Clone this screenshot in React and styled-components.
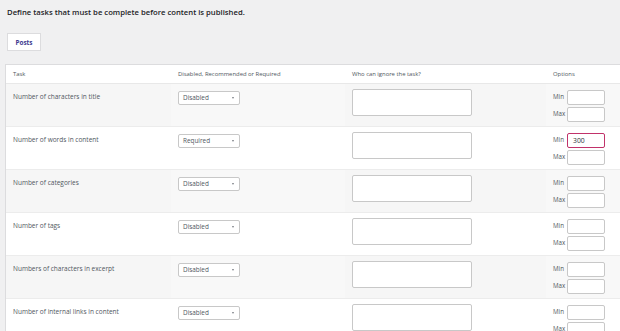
import React from "react";
import styled, { createGlobalStyle } from "styled-components";

const GlobalStyle = createGlobalStyle`
  html, body {
    margin: 0;
    padding: 0;
    background: #f0f0f1;
    font-family: "Open Sans", "Noto Sans", sans-serif;
    overflow: hidden;
  }
`;

const Page = styled.div`
  width: 620px;
  height: 331px;
  overflow: hidden;
  padding-left: 5px;
  box-sizing: border-box;
`;

const Title = styled.h2`
  margin: 0;
  padding: 6px 0 0 2px;
  height: 27px;
  box-sizing: border-box;
  font-size: 7.7px;
  font-weight: 600;
  color: #1d2327;
  line-height: 12px;
`;

const Tabs = styled.div`
  display: flex;
  padding-left: 2px;
  height: 37px;
  padding-top: 6px;
  box-sizing: border-box;
`;

const Tab = styled.button`
  width: 34px;
  height: 18px;
  padding: 0;
  background: #fff;
  border: 1px solid #dcdcde;
  color: #3c3a8f;
  font-family: inherit;
  font-size: 6.4px;
  font-weight: 700;
`;

const Table = styled.div`
  width: 640px;
  background: #fff;
  border-left: 1px solid #dcdcde;
  border-top: 1px solid #dcdcde;
`;

const cols = "165px 174px 201px 1fr";

const HeadRow = styled.div`
  display: grid;
  grid-template-columns: ${cols};
  height: 18px;
  align-items: center;
  border-bottom: 1px solid #e8e8e8;
  font-size: 5.9px;
  color: #50575e;
`;

const HeadCell = styled.div`
  padding-left: 7px;
`;

const Row = styled.div`
  display: grid;
  grid-template-columns: ${cols};
  height: 43px;
  box-sizing: border-box;
  border-bottom: 1px solid #ececec;
  background: ${(p) => (p.$alt ? "#f6f6f6" : "#fff")};
`;

const Cell = styled.div`
  padding: 5px 0 0 7px;
  font-size: 6.5px;
  color: #50575e;
  line-height: 16px;
  background: ${(p) => (p.$alt && p.$light ? "#f8f8f8" : "transparent")};
`;

const Select = styled.div`
  display: flex;
  align-items: center;
  justify-content: space-between;
  width: 62px;
  height: 14px;
  box-sizing: border-box;
  margin-top: 2px;
  padding: 0 5px 0 4px;
  background: #fff;
  border: 1px solid #c8c8c8;
  border-radius: 2px;
  font-size: 6.4px;
  color: #50575e;
  line-height: 12px;
`;

const Caret = styled.span`
  width: 0;
  height: 0;
  border-left: 1.6px solid transparent;
  border-right: 1.6px solid transparent;
  border-top: 2px solid #787c82;
`;

const TextBox = styled.div`
  width: 120px;
  height: 27px;
  box-sizing: border-box;
  background: #fff;
  border: 1px solid #c8c8c8;
  border-radius: 2px;
`;

const Options = styled.div`
  display: flex;
  flex-direction: column;
  gap: 3px;
  margin-top: 1px;
`;

const OptLine = styled.div`
  display: flex;
  align-items: center;
  height: 14px;
`;

const OptLabel = styled.span`
  width: 14px;
  font-size: 6.2px;
  color: #50575e;
`;

const NumInput = styled.div`
  width: 38px;
  height: 15px;
  box-sizing: border-box;
  background: #fff;
  border: 1px solid ${(p) => (p.$active ? "#c1326a" : "#c8c8c8")};
  border-radius: 2px;
  padding-left: 5px;
  font-size: 6.8px;
  line-height: 13px;
  color: #2c3338;
`;

const rows = [
  { task: "Number of characters in title", mode: "Disabled" },
  { task: "Number of words in content", mode: "Required", min: "300" },
  { task: "Number of categories", mode: "Disabled" },
  { task: "Number of tags", mode: "Disabled" },
  { task: "Numbers of characters in excerpt", mode: "Disabled" },
  { task: "Number of internal links in content", mode: "Disabled" },
];

export default function App() {
  return (
    <>
      <GlobalStyle />
      <Page>
        <Title>Define tasks that must be complete before content is published.</Title>
        <Tabs>
          <Tab>Posts</Tab>
        </Tabs>
        <Table>
          <HeadRow>
            <HeadCell>Task</HeadCell>
            <HeadCell>Disabled, Recommended or Required</HeadCell>
            <HeadCell>Who can ignore the task?</HeadCell>
            <HeadCell>Options</HeadCell>
          </HeadRow>
          {rows.map((r, i) => {
            const alt = i % 2 === 0;
            return (
              <Row key={r.task} $alt={alt}>
                <Cell $alt={alt}>{r.task}</Cell>
                <Cell $alt={alt} $light>
                  <Select>
                    {r.mode}
                    <Caret />
                  </Select>
                </Cell>
                <Cell $alt={alt}>
                  <TextBox />
                </Cell>
                <Cell $alt={alt} $light>
                  <Options>
                    <OptLine>
                      <OptLabel>Min</OptLabel>
                      <NumInput $active={!!r.min}>{r.min}</NumInput>
                    </OptLine>
                    <OptLine>
                      <OptLabel>Max</OptLabel>
                      <NumInput />
                    </OptLine>
                  </Options>
                </Cell>
              </Row>
            );
          })}
        </Table>
      </Page>
    </>
  );
}
